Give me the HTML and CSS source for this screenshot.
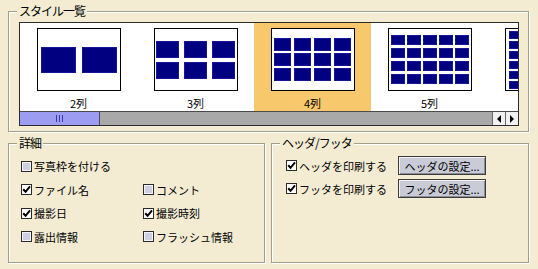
FILE: index.html
```html
<!DOCTYPE html>
<html lang="ja">
<head>
<meta charset="utf-8">
<link rel="stylesheet" href="styles.css">
</head>
<body>
<div class="window">
  <section class="group group-style">
    <span class="group-title">スタイル一覧</span>
    <div class="listbox">
      <div class="items">
        <div class="item">
          <div class="thumb g2"><i></i><i></i></div>
          <div class="cap">2列</div>
        </div>
        <div class="item">
          <div class="thumb g3"><i></i><i></i><i></i><i></i><i></i><i></i></div>
          <div class="cap">3列</div>
        </div>
        <div class="item sel">
          <div class="thumb g4"><i></i><i></i><i></i><i></i><i></i><i></i><i></i><i></i><i></i><i></i><i></i><i></i></div>
          <div class="cap">4列</div>
        </div>
        <div class="item">
          <div class="thumb g5"><i></i><i></i><i></i><i></i><i></i><i></i><i></i><i></i><i></i><i></i><i></i><i></i><i></i><i></i><i></i><i></i><i></i><i></i><i></i><i></i></div>
          <div class="cap">5列</div>
        </div>
        <div class="item">
          <div class="thumb g6"><i></i><i></i><i></i><i></i><i></i><i></i><i></i><i></i><i></i><i></i><i></i><i></i><i></i><i></i><i></i><i></i><i></i><i></i><i></i><i></i><i></i><i></i><i></i><i></i><i></i><i></i><i></i><i></i><i></i><i></i><i></i><i></i><i></i><i></i><i></i><i></i></div>
          <div class="cap"></div>
        </div>
      </div>
      <div class="scrollbar">
        <div class="sb-thumb"><span class="grip"></span><span class="grip"></span><span class="grip"></span></div>
        <div class="sb-track"></div>
        <div class="sb-btn"><span class="tri-left"></span></div>
        <div class="sb-btn"><span class="tri-right"></span></div>
      </div>
    </div>
  </section>

  <div class="bottom">
    <section class="group group-detail">
      <span class="group-title">詳細</span>
      <div class="detail-grid">
        <label class="chk full"><span class="box"></span>写真枠を付ける</label>
        <label class="chk"><span class="box on"><svg viewBox="0 0 9 9" width="9" height="9"><path d="M1.2 4.2 L3.6 6.8 L8 1.4" fill="none" stroke="#000" stroke-width="2"/></svg></span>ファイル名</label>
        <label class="chk"><span class="box"></span>コメント</label>
        <label class="chk"><span class="box on"><svg viewBox="0 0 9 9" width="9" height="9"><path d="M1.2 4.2 L3.6 6.8 L8 1.4" fill="none" stroke="#000" stroke-width="2"/></svg></span>撮影日</label>
        <label class="chk"><span class="box on"><svg viewBox="0 0 9 9" width="9" height="9"><path d="M1.2 4.2 L3.6 6.8 L8 1.4" fill="none" stroke="#000" stroke-width="2"/></svg></span>撮影時刻</label>
        <label class="chk"><span class="box"></span>露出情報</label>
        <label class="chk"><span class="box"></span>フラッシュ情報</label>
      </div>
    </section>

    <section class="group group-hf">
      <span class="group-title">ヘッダ/フッタ</span>
      <div class="hf-grid">
        <label class="chk"><span class="box on"><svg viewBox="0 0 9 9" width="9" height="9"><path d="M1.2 4.2 L3.6 6.8 L8 1.4" fill="none" stroke="#000" stroke-width="2"/></svg></span>ヘッダを印刷する</label>
        <button class="btn">ヘッダの設定...</button>
        <label class="chk"><span class="box on"><svg viewBox="0 0 9 9" width="9" height="9"><path d="M1.2 4.2 L3.6 6.8 L8 1.4" fill="none" stroke="#000" stroke-width="2"/></svg></span>フッタを印刷する</label>
        <button class="btn">フッタの設定...</button>
      </div>
    </section>
  </div>
</div>
</body>
</html>
```

FILE: styles.css
```css
html, body {
  margin: 0;
  padding: 0;
}
body {
  width: 538px;
  height: 269px;
  overflow: hidden;
  background: #f3ecd3;
  color: #000;
  font-family: "Noto Sans CJK JP", "Liberation Sans", sans-serif;
  font-size: 11px;
}
.window {
  padding: 11px 9px 0 8px;
}
.group {
  position: relative;
  box-sizing: border-box;
  border: 1px solid #a29e8c;
  box-shadow: inset 1px 1px 0 #fff, 1px 1px 0 #fff;
}
.group-title {
  position: absolute;
  top: -9px;
  left: 8px;
  padding: 0 2px;
  background: #f3ecd3;
  font-size: 12px;
  line-height: 15px;
  letter-spacing: -1px;
}
.group-style {
  height: 121px;
  padding: 10px 0 0 10px;
}
.listbox {
  box-sizing: border-box;
  width: 500px;
  height: 104px;
  border: 1px solid #2c2c2c;
  background: #fff;
  display: flex;
  flex-direction: column;
  overflow: hidden;
}
.items {
  display: flex;
  height: 88px;
  flex: none;
}
.item {
  flex: 0 0 117px;
  box-sizing: border-box;
  padding-top: 5px;
  display: flex;
  flex-direction: column;
  align-items: center;
}
.item.sel {
  background: #f8c86c;
}
.thumb {
  box-sizing: border-box;
  width: 84px;
  height: 63px;
  flex: none;
  border: 1px solid #000;
  background: #fff;
  display: grid;
  justify-content: center;
  align-content: center;
}
.thumb i {
  display: block;
  background: #000080;
  box-shadow: inset 0 0 0 1px #15159a;
}
.g2 { grid-template-columns: repeat(2, 35px); grid-template-rows: 26px; column-gap: 6px; }
.g3 { grid-template-columns: repeat(3, 23px); grid-template-rows: repeat(2, 17px); column-gap: 5px; row-gap: 4px; }
.g4 { grid-template-columns: repeat(4, 17px); grid-template-rows: repeat(3, 13px); column-gap: 3px; row-gap: 2px; }
.g5 { grid-template-columns: repeat(5, 14px); grid-template-rows: repeat(4, 10px); column-gap: 2px; row-gap: 3px; }
.g6 { grid-template-columns: repeat(6, 11px); grid-template-rows: repeat(6, 8px); column-gap: 2px; row-gap: 2px; }
.cap {
  margin-top: 6px;
  height: 12px;
  line-height: 12px;
}
.scrollbar {
  display: flex;
  height: 14px;
  flex: none;
  box-sizing: border-box;
  border-top: 1px solid #4a4a4a;
}
.sb-thumb {
  width: 80px;
  box-sizing: border-box;
  background: #9c9cf2;
  border-right: 1px solid #4a4a70;
  display: flex;
  justify-content: center;
  align-items: center;
  gap: 2px;
}
.grip {
  width: 1px;
  height: 7px;
  background: #3c3ca8;
}
.sb-track {
  flex: 1;
  background: #a9a9a9;
}
.sb-btn {
  width: 13px;
  box-sizing: border-box;
  background: #f2f2f2;
  border-left: 1px solid #6a6a6a;
  display: flex;
  justify-content: center;
  align-items: center;
}
.tri-left {
  width: 0;
  height: 0;
  border-top: 4px solid transparent;
  border-bottom: 4px solid transparent;
  border-right: 4px solid #000;
}
.tri-right {
  width: 0;
  height: 0;
  border-top: 4px solid transparent;
  border-bottom: 4px solid transparent;
  border-left: 4px solid #000;
}
.bottom {
  display: flex;
  gap: 6px;
  margin-top: 11px;
}
.group-detail {
  width: 257px;
  height: 120px;
  padding: 14px 0 0 12px;
}
.group-hf {
  width: 258px;
  height: 120px;
  padding: 12px 0 0 14px;
}
.detail-grid {
  display: grid;
  grid-template-columns: 122px 1fr;
  grid-auto-rows: 16px;
  row-gap: 7.5px;
}
.detail-grid .full {
  grid-column: 1 / span 2;
}
.chk {
  display: flex;
  align-items: center;
  gap: 2px;
  line-height: 16px;
  white-space: nowrap;
}
.box {
  box-sizing: border-box;
  width: 11px;
  height: 11px;
  flex: none;
  border: 1px solid #2a2a2a;
  background: #cfcfe4;
  box-shadow: inset 0 0 0 1px #f4f4f8;
  display: flex;
  align-items: center;
  justify-content: center;
}
.box.on {
  background: #fff;
  box-shadow: none;
}
.box svg {
  display: block;
}
.hf-grid {
  display: grid;
  grid-template-columns: 112px 88px;
  grid-auto-rows: 19px;
  row-gap: 4px;
}
.btn {
  box-sizing: border-box;
  width: 88px;
  height: 19px;
  padding: 0;
  margin: 0;
  font: inherit;
  color: #000;
  background: #c9cbd6;
  border: 1px solid #3c3c3c;
  box-shadow: inset 1px 1px 0 #f2f2f6, inset -1px -1px 0 #8c8c98;
}
```
